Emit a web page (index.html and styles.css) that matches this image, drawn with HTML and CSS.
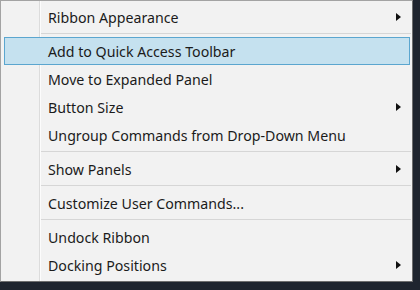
FILE: index.html
```html
<!doctype html>
<html lang="en">

<head>
  <meta charset="utf-8">
  <title>Ribbon context menu</title>
  <link rel="stylesheet" href="styles.css">
</head>

<body>

  <div class="menu">
    <div class="menu__item">Ribbon Appearance<span class="menu__arrow"></span></div>
    <div class="menu__sep"></div>
    <div class="menu__item menu__item_active">Add to Quick Access Toolbar</div>
    <div class="menu__item">Move to Expanded Panel</div>
    <div class="menu__item">Button Size<span class="menu__arrow"></span></div>
    <div class="menu__item">Ungroup Commands from Drop-Down Menu</div>
    <div class="menu__sep"></div>
    <div class="menu__item">Show Panels<span class="menu__arrow"></span></div>
    <div class="menu__sep"></div>
    <div class="menu__item">Customize User Commands...</div>
    <div class="menu__sep"></div>
    <div class="menu__item">Undock Ribbon</div>
    <div class="menu__item">Docking Positions<span class="menu__arrow"></span></div>
  </div>

</body>

</html>
```

FILE: styles.css
```css
body {
  margin: 0;
  height: 290px;
  background-color: #1f252f;
  font-family: "Noto Sans", "Open Sans", sans-serif;
  font-size: 14.2px;
  color: #1b1b1b;
}

*,
*::before,
*::after {
  box-sizing: border-box;
}

.menu {
  width: 413px;
  height: 282px;
  padding-top: 2px;
  background-color: #f2f2f2;
  background-image: linear-gradient(#dcdcdc, #dcdcdc), linear-gradient(#fcfcfc, #fcfcfc);
  background-size: 1px 100%, 1px 100%;
  background-position: 38px 0, 39px 0;
  background-repeat: no-repeat;
  border: 1px solid #a3a3a3;
  border-right-color: #6e6e6e;
  border-bottom-color: #6e6e6e;
}

.menu__item {
  display: flex;
  align-items: center;
  height: 28px;
  margin: 0 2px 0 3px;
  padding: 0 8px 0 43px;
  border: 1px solid transparent;
  white-space: nowrap;
}

.menu__item_active {
  background-color: #c5e1ef;
  border-color: #5ba6cf;
}

.menu__arrow {
  margin-left: auto;
  width: 0;
  height: 0;
  border-top: 4px solid transparent;
  border-bottom: 4px solid transparent;
  border-left: 5px solid #111;
}

.menu__sep {
  height: 1px;
  margin: 2px 1px 3px 40px;
  background-color: #d6d6d6;
}
```
